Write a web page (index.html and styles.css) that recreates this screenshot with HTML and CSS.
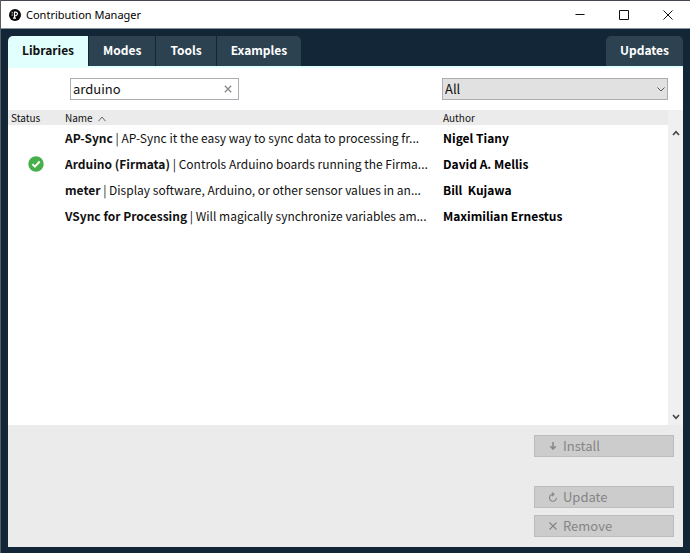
FILE: index.html
```html
<!DOCTYPE html>
<html lang="en">
<head>
<meta charset="utf-8">
<title>Contribution Manager</title>
<link rel="stylesheet" href="styles.css">
</head>
<body>
<div class="window">
  <header class="titlebar">
    <svg class="app-icon" viewBox="0 0 12 12" aria-hidden="true"><circle cx="6" cy="6" r="6" fill="#080808"/><path d="M5.500 3v6.200M4 9.200h3M5 3.200c4.500-1 4.500 3.600.5 3.600" fill="none" stroke="#fff" stroke-width="1.200"/><path d="M3.200 2.800v1.600M3.200 5.300v1.500" fill="none" stroke="#ccc" stroke-width="1"/></svg>
    <h1 class="title">Contribution Manager</h1>
    <div class="window-controls">
      <button class="window-button" type="button" aria-label="Minimize"><svg viewBox="0 0 10 10"><path d="M.5 4.500h9"/></svg></button>
      <button class="window-button" type="button" aria-label="Maximize"><svg viewBox="0 0 10 10"><path d="M.5.5h9v9h-9z"/></svg></button>
      <button class="window-button" type="button" aria-label="Close"><svg viewBox="0 0 10 10"><path d="M.5.5l9 9M9.500.5l-9 9"/></svg></button>
    </div>
  </header>
  <nav class="tabs">
    <button class="tab tab-first tab-active" type="button">Libraries</button>
    <button class="tab" type="button">Modes</button>
    <button class="tab" type="button">Tools</button>
    <button class="tab tab-last" type="button">Examples</button>
    <button class="tab tab-updates" type="button">Updates</button>
  </nav>
  <main class="panel">
    <div class="toolbar">
      <div class="search">
        <input class="search-input" type="text" value="arduino" aria-label="Filter">
        <button class="search-clear" type="button" aria-label="Clear"><svg viewBox="0 0 8 8"><path d="M.8.8l6.400 6.400M7.200.8L.8 7.200"/></svg></button>
      </div>
      <div class="category">
        <select class="category-select" aria-label="Category"><option>All</option></select>
        <svg class="category-arrow" viewBox="0 0 8 5" aria-hidden="true"><path d="M.5.5L4 4 7.500.5"/></svg>
      </div>
    </div>
    <div class="list">
      <table class="table">
        <thead>
          <tr>
            <th class="col-status">Status</th>
            <th>Name <svg class="sort" viewBox="0 0 8 6" aria-hidden="true"><path d="M.5 5.200L4 1l3.500 4.200"/></svg></th>
            <th class="col-author">Author</th>
          </tr>
        </thead>
        <tbody>
          <tr><td></td><td><b>AP-Sync</b> | AP-Sync it the easy way to sync data to processing fr...</td><td class="author">Nigel Tiany</td></tr>
          <tr><td><svg class="check" viewBox="0 0 16 16" role="img" aria-label="Installed"><circle cx="8" cy="8" r="7.700" fill="#47b04b"/><path d="M4.400 8.200l2.500 2.500 4.800-5.200" fill="none" stroke="#fff" stroke-width="1.900"/></svg></td><td><b>Arduino (Firmata)</b> | Controls Arduino boards running the Firma...</td><td class="author">David A. Mellis</td></tr>
          <tr><td></td><td><b>meter</b> | Display software, Arduino, or other sensor values in an...</td><td class="author">Bill&nbsp; Kujawa</td></tr>
          <tr><td></td><td><b>VSync for Processing</b> | Will magically synchronize variables am...</td><td class="author">Maximilian Ernestus</td></tr>
        </tbody>
      </table>
      <div class="scrollbar">
        <button class="scroll-button" type="button" aria-label="Scroll up"><svg viewBox="0 0 8 6"><path d="M1 5l3-3.400L7 5"/></svg></button>
        <button class="scroll-button" type="button" aria-label="Scroll down"><svg viewBox="0 0 8 6"><path d="M1 1l3 3.400L7 1"/></svg></button>
      </div>
    </div>
    <footer class="footer">
      <button class="action action-install" type="button" disabled><svg viewBox="0 0 10 10"><path d="M5 1v7M2.200 5.200L5 8l2.800-2.800" stroke-width="1.500"/></svg>Install</button>
      <button class="action" type="button" disabled><svg viewBox="0 0 10 10"><path d="M5.500 2.300A3.500 3.500 0 1 0 8.500 5.800M4 .4l2 1.900-2 1.900" stroke-width="1.100"/></svg>Update</button>
      <button class="action" type="button" disabled><svg viewBox="0 0 10 10"><path d="M1.500 1.500l7 7M8.500 1.500l-7 7" stroke-width="1.200"/></svg>Remove</button>
    </footer>
  </main>
</div>
</body>
</html>
```
FILE: styles.css
```css
* {
  box-sizing: border-box;
}

body {
  margin: 0;
  font-family: "Noto Sans CJK SC", "Open Sans", sans-serif;
  font-size: 12px;
  line-height: 20px;
  color: #111;
}

button,
input,
select {
  margin: 0;
  font: inherit;
  color: inherit;
}

svg {
  display: block;
  fill: none;
  stroke: currentColor;
}

.app-icon,
.check {
  stroke: none;
}

.window {
  display: flex;
  flex-direction: column;
  min-height: 100vh;
  padding-bottom: 6px;
  border-left: 1px solid #565d63;
  background: #132638;
}

.titlebar {
  display: flex;
  align-items: center;
  height: 29px;
  padding-left: 8px;
  border-top: 1px solid #45464f;
  border-bottom: 1px solid #87929a;
  background: #fff;
}

.app-icon {
  width: 12px;
  height: 12px;
}

.title {
  margin: 0 auto 0 5px;
  font: 11px/20px "Noto Sans", "Open Sans", sans-serif;
  color: #000;
}

.window-controls {
  display: flex;
}

.window-button {
  display: grid;
  place-items: center;
  width: 44px;
  height: 26px;
  padding: 0;
  border: 0;
  background: none;
}

.window-button svg {
  width: 10px;
  height: 10px;
}

.tabs {
  display: flex;
  gap: 1px;
  padding: 7px 7px 0;
}

.tab {
  height: 30px;
  padding: 0 14px 2px;
  border: 0;
  background: #2d4251;
  color: #fff;
  font-weight: 700;
}

.tab-first {
  border-top-left-radius: 5px;
}

.tab-last {
  border-top-right-radius: 5px;
}

.tab-active {
  background: #e0fffd;
  color: #111;
}

.tab-updates {
  margin-left: auto;
  border-radius: 5px 5px 0 0;
}

.panel {
  display: flex;
  flex: 1;
  flex-direction: column;
  margin: 0 7px;
  border-top: 2px solid #e0fffd;
  background: #fff;
}

.toolbar {
  display: flex;
  justify-content: space-between;
  padding: 10px 15px 10px 62px;
}

.search,
.category {
  position: relative;
}

.search {
  width: 169px;
}

.category {
  width: 226px;
}

.search-input,
.category-select {
  display: block;
  width: 100%;
  height: 22px;
  padding: 0 2px;
  border: 1px solid #abadb3;
  border-radius: 0;
  background: #fff;
  font-size: 13px;
}

.search-input {
  padding-bottom: 2px;
}

.category-select {
  appearance: none;
  background: #e1e1e1;
}

.search-clear {
  position: absolute;
  top: 0;
  right: 0;
  display: grid;
  place-items: center;
  width: 23px;
  height: 22px;
  padding: 0;
  border: 0;
  background: none;
  color: #888;
}

.search-clear svg {
  width: 8px;
  height: 8px;
  stroke-width: 1.3;
}

.category-arrow {
  position: absolute;
  top: 9px;
  right: 3px;
  width: 8px;
  height: 5px;
  color: #555;
}

.list {
  display: flex;
  flex: 1;
  align-items: stretch;
}

.table {
  flex: 1;
  align-self: flex-start;
  width: 100%;
  border-collapse: collapse;
  table-layout: fixed;
}

th {
  height: 15px;
  padding: 0 1px;
  background: #ebebeb;
  font-size: 10px;
  font-weight: 400;
  line-height: 15px;
  text-align: left;
}

.col-status {
  width: 56px;
  padding-left: 3px;
}

.col-author {
  width: 226px;
}

.sort {
  display: inline-block;
  width: 8px;
  height: 6px;
  margin-left: 3px;
  color: #666;
}

td {
  height: 26px;
  padding: 0 1px;
  overflow: hidden;
  white-space: nowrap;
}

.author {
  font-weight: 700;
  color: #000;
}

.check {
  width: 16px;
  height: 16px;
  margin: 0 auto;
}

.scrollbar {
  display: flex;
  flex-direction: column;
  justify-content: space-between;
  width: 15px;
  padding-top: 15px;
  background: #f0f0f0;
}

.scroll-button {
  display: grid;
  place-items: center;
  height: 16px;
  padding: 0;
  border: 0;
  background: none;
  color: #444;
}

.scroll-button svg {
  width: 8px;
  height: 6px;
  stroke-width: 1.6;
}

.footer {
  display: flex;
  flex-direction: column;
  align-items: flex-end;
  gap: 7px;
  padding: 10px 9px;
  background: #ebebeb;
}

.action {
  display: flex;
  align-items: center;
  gap: 5px;
  width: 140px;
  height: 22px;
  padding: 0 13px;
  border: 1px solid #bcbcbc;
  background: #ccc;
  color: #858585;
  font-size: 13px;
}

.action-install {
  margin-bottom: 22px;
}

.action svg {
  width: 10px;
  height: 10px;
}
```
